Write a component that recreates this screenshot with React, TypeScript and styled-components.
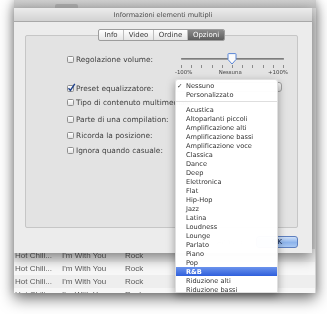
import styled, { createGlobalStyle } from 'styled-components'

const GlobalStyle = createGlobalStyle`
  html, body {
    margin: 0;
    padding: 0;
    background: #ffffff;
  }
  body {
    font-family: "DejaVu Sans", "Liberation Sans", sans-serif;
    -webkit-font-smoothing: antialiased;
  }
`

const Stage = styled.div`
  position: relative;
  width: 327px;
  height: 314px;
  overflow: hidden;
  background: #ffffff;
  filter: blur(0.3px);
`

const OuterWindow = styled.div`
  margin-left: 14px;
  width: 302px;
  height: 293px;
  display: flex;
  flex-direction: column;
  background: #d4d4d4;
  overflow: hidden;
  box-shadow: 0 6px 14px rgba(0, 0, 0, 0.5), 0 0 8px rgba(0, 0, 0, 0.25);
`

const TopStrip = styled.div`
  height: 8px;
  flex-shrink: 0;
  display: flex;
  align-items: flex-end;
  padding-left: 41px;
  background: linear-gradient(#cfcfcf, #bdbdbd);
`

const StripButton = styled.div`
  width: 23px;
  height: 4px;
  border-radius: 2px 2px 0 0;
  background: #a9a9a9;
`

const Dialog = styled.div`
  position: relative;
  z-index: 1;
  width: 298px;
  height: 245px;
  flex-shrink: 0;
  display: flex;
  flex-direction: column;
  background: #ececec;
  box-shadow: 0 5px 12px rgba(0, 0, 0, 0.45);
`

const TitleBar = styled.div`
  height: 13px;
  flex-shrink: 0;
  display: flex;
  align-items: center;
  justify-content: center;
  font-size: 6.6px;
  color: #4a4a4a;
  background: linear-gradient(#ececec, #d2d2d2);
  border-bottom: 1px solid #a8a8a8;
`

const DialogBody = styled.div`
  flex: 1;
  display: flex;
  flex-direction: column;
  padding: 7px 14px 9px 11px;
`

const TabBar = styled.div`
  position: relative;
  z-index: 1;
  align-self: center;
  display: flex;
  height: 10px;
  border: 1px solid #9c9c9c;
  border-radius: 2px;
  background: linear-gradient(#ffffff, #e6e6e6);
  overflow: hidden;
`

const Tab = styled.div<{ $active?: boolean; $w: number }>`
  width: ${p => p.$w}px;
  display: flex;
  align-items: center;
  justify-content: center;
  font-size: 7px;
  color: ${p => (p.$active ? '#ffffff' : '#3c3c3c')};
  background: ${p => (p.$active ? 'linear-gradient(#8a8a8a, #5e5e5e)' : 'transparent')};
  border-left: 1px solid #bdbdbd;
  &:first-child {
    border-left: none;
  }
`

const GroupBox = styled.div`
  margin-top: -6px;
  height: 193px;
  box-sizing: border-box;
  border: 1px solid #c6c6c6;
  border-radius: 2px;
  background: #e3e3e3;
  padding-top: 17px;
  display: flex;
  flex-direction: column;
`

const Row = styled.div<{ $h: number }>`
  height: ${p => p.$h}px;
  display: grid;
  grid-template-columns: 149px 113px;
  align-items: start;
`

const OptionLabel = styled.label`
  display: flex;
  align-items: center;
  gap: 2px;
  height: 12px;
  padding-left: 41px;
  font-size: 7.4px;
  color: #3e3e3e;
  white-space: nowrap;
`

const Box = styled.span`
  position: relative;
  width: 7px;
  height: 7px;
  box-sizing: border-box;
  flex-shrink: 0;
  border: 1px solid #8f8f8f;
  border-radius: 1.5px;
  background: linear-gradient(#ffffff, #e2e2e2);
`

const CheckMark = styled.svg`
  position: absolute;
  left: -1px;
  top: -3px;
  width: 9px;
  height: 9px;
`

const Slider = styled.div`
  display: flex;
  flex-direction: column;
`

const TrackArea = styled.div`
  position: relative;
  height: 12px;
  margin: 0 4px 0 6px;
  display: flex;
  align-items: center;
`

const Track = styled.div`
  flex: 1;
  height: 2px;
  border-radius: 1px;
  background: #9e9e9e;
  box-shadow: inset 0 1px 0 #7d7d7d;
`

const Knob = styled.svg`
  position: absolute;
  left: 46px;
  top: 0px;
  width: 10px;
  height: 12px;
`

const Ticks = styled.div`
  display: flex;
  justify-content: space-between;
  margin: 0 4px 0 6px;
  height: 3px;
`

const Tick = styled.span`
  width: 1px;
  height: 3px;
  background: #8a8a8a;
`

const SliderLabels = styled.div`
  display: flex;
  justify-content: space-between;
  font-size: 5.4px;
  color: #444;
  margin-top: 1px;
`

const PopupButton = styled.div`
  width: 107px;
  height: 10px;
  border: 1px solid #a0a0a0;
  border-radius: 3px;
  background: linear-gradient(#fafafa, #dcdcdc);
  box-sizing: border-box;
`

const ButtonRow = styled.div`
  display: flex;
  justify-content: flex-end;
  gap: 6px;
  margin-top: 8px;
`

const PushButton = styled.div<{ $primary?: boolean }>`
  width: ${p => (p.$primary ? 40 : 38)}px;
  height: 10px;
  border-radius: 3px;
  display: flex;
  align-items: center;
  justify-content: center;
  font-size: 7px;
  color: ${p => (p.$primary ? '#10214a' : '#c8c8c8')};
  border: 1px solid ${p => (p.$primary ? '#5d7fbf' : '#dcdcdc')};
  background: ${p =>
    p.$primary ? 'linear-gradient(#cfe0f8, #8db4ec 55%, #a9c8f2)' : 'linear-gradient(#f6f6f6, #ebebeb)'};
`

const Table = styled.div`
  margin-top: -4px;
  flex: 1;
  display: flex;
  flex-direction: column;
  margin-right: 1px;
  background: #f4f4f4;
`

const TableRow = styled.div<{ $alt?: boolean }>`
  height: 13px;
  flex-shrink: 0;
  display: grid;
  grid-template-columns: 47px 63px 1fr;
  align-items: center;
  padding-left: 1px;
  font-family: "Liberation Sans", Arial, sans-serif;
  font-size: 8px;
  color: #5a5a5a;
  background: ${p => (p.$alt ? '#f7f7f7' : '#eeeeee')};
  white-space: nowrap;
`

const Menu = styled.div`
  position: absolute;
  z-index: 5;
  left: 175px;
  top: 79px;
  width: 103px;
  height: 214px;
  overflow: hidden;
  padding-top: 1px;
  box-sizing: border-box;
  background: rgba(255, 255, 255, 0.98);
  border: 1px solid rgba(0, 0, 0, 0.12);
  border-radius: 3px 3px 0 0;
  box-shadow: 0 3px 8px rgba(0, 0, 0, 0.35);
`

const MenuItem = styled.div<{ $selected?: boolean }>`
  height: 9px;
  display: flex;
  align-items: center;
  font-size: 6.6px;
  color: ${p => (p.$selected ? '#ffffff' : '#333333')};
  font-weight: ${p => (p.$selected ? 'bold' : 'normal')};
  background: ${p => (p.$selected ? 'linear-gradient(#6b93ec, #2f5fdc)' : 'transparent')};
  white-space: nowrap;
`

const MenuCheck = styled.span`
  width: 9px;
  padding-left: 1px;
  font-size: 6.5px;
  color: #222;
`

const Separator = styled.div`
  height: 1px;
  margin: 2px 0 3px;
  background: #dedede;
`

const ticks = Array.from({ length: 11 })

const presets = [
  'Acustica',
  'Altoparlanti piccoli',
  'Amplificazione alti',
  'Amplificazione bassi',
  'Amplificazione voce',
  'Classica',
  'Dance',
  'Deep',
  'Elettronica',
  'Flat',
  'Hip-Hop',
  'Jazz',
  'Latina',
  'Loudness',
  'Lounge',
  'Parlato',
  'Piano',
  'Pop',
  'R&B',
  'Riduzione alti',
  'Riduzione bassi',
]

function Checkbox({ checked }: { checked?: boolean }) {
  return (
    <Box>
      {checked && (
        <CheckMark viewBox="0 0 9 9">
          <path d="M1.5 5.2 L3.4 7.4 L7.8 0.8" fill="none" stroke="#1d3f8a" strokeWidth="1.4" />
        </CheckMark>
      )}
    </Box>
  )
}

export default function App() {
  return (
    <>
      <GlobalStyle />
      <Stage>
        <OuterWindow>
          <TopStrip>
            <StripButton />
          </TopStrip>
          <Dialog>
            <TitleBar>Informazioni elementi multipli</TitleBar>
            <DialogBody>
              <TabBar>
                <Tab $w={24}>Info</Tab>
                <Tab $w={29}>Video</Tab>
                <Tab $w={33}>Ordine</Tab>
                <Tab $w={36} $active>
                  Opzioni
                </Tab>
              </TabBar>
              <GroupBox>
                <Row $h={29}>
                  <OptionLabel>
                    <Checkbox />
                    Regolazione volume:
                  </OptionLabel>
                  <Slider>
                    <TrackArea>
                      <Track />
                      <Knob viewBox="0 0 10 12">
                        <path
                          d="M1 1.2 Q1 0.6 1.6 0.6 L8.4 0.6 Q9 0.6 9 1.2 L9 6.5 L5 11 L1 6.5 Z"
                          fill="#fbfbfb"
                          stroke="#5a86d6"
                          strokeWidth="1"
                        />
                      </Knob>
                    </TrackArea>
                    <Ticks>
                      {ticks.map((_, i) => (
                        <Tick key={i} />
                      ))}
                    </Ticks>
                    <SliderLabels>
                      <span>-100%</span>
                      <span>Nessuna</span>
                      <span>+100%</span>
                    </SliderLabels>
                  </Slider>
                </Row>
                <Row $h={14}>
                  <OptionLabel>
                    <Checkbox checked />
                    Preset equalizzatore:
                  </OptionLabel>
                  <PopupButton />
                </Row>
                <Row $h={17}>
                  <OptionLabel>
                    <Checkbox />
                    Tipo di contenuto multimediale:
                  </OptionLabel>
                </Row>
                <Row $h={16}>
                  <OptionLabel>
                    <Checkbox />
                    Parte di una compilation:
                  </OptionLabel>
                </Row>
                <Row $h={15}>
                  <OptionLabel>
                    <Checkbox />
                    Ricorda la posizione:
                  </OptionLabel>
                </Row>
                <Row $h={15}>
                  <OptionLabel>
                    <Checkbox />
                    Ignora quando casuale:
                  </OptionLabel>
                </Row>
              </GroupBox>
              <ButtonRow>
                <PushButton>Annulla</PushButton>
                <PushButton $primary>OK</PushButton>
              </ButtonRow>
            </DialogBody>
          </Dialog>
          <Table>
            {[0, 1, 2, 3].map(i => (
              <TableRow key={i} $alt={i % 2 === 1}>
                <span>Hot Chili...</span>
                <span>I'm With You</span>
                <span>Rock</span>
              </TableRow>
            ))}
          </Table>
        </OuterWindow>
        <Menu>
          <MenuItem>
            <MenuCheck>✓</MenuCheck>
            Nessuno
          </MenuItem>
          <MenuItem>
            <MenuCheck />
            Personalizzato
          </MenuItem>
          <Separator />
          {presets.map(p => (
            <MenuItem key={p} $selected={p === 'R&B'}>
              <MenuCheck />
              {p}
            </MenuItem>
          ))}
        </Menu>
      </Stage>
    </>
  )
}
